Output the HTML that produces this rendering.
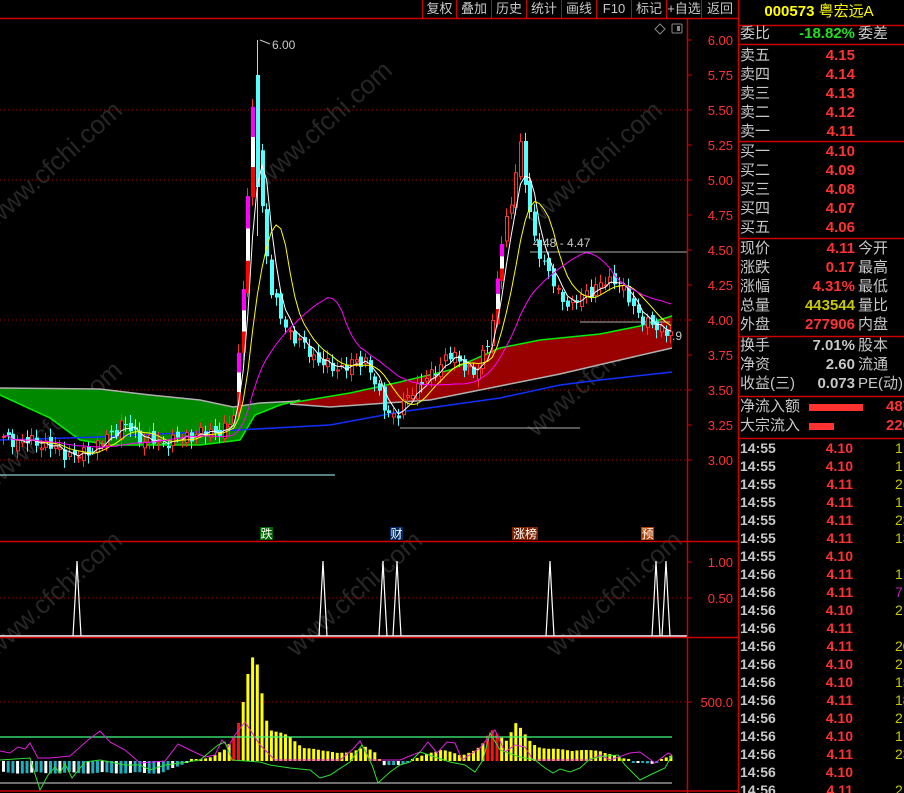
<!DOCTYPE html>
<html><head><meta charset="utf-8"><style>
html,body{margin:0;padding:0;background:#000;width:904px;height:793px;overflow:hidden;font-family:"Liberation Sans","Noto Sans CJK SC",sans-serif}
#wrap{position:relative;width:904px;height:793px}
svg{position:absolute;left:0;top:0}
.rp{position:absolute;left:739px;width:165px;font-size:15px;color:#c8c8c8;white-space:nowrap}
.r{position:absolute;height:19px;line-height:19px;width:165px}
.v{position:absolute;right:50px;font-weight:bold;color:#ff3232;text-align:right}
.l3{position:absolute;left:118px}
.tb{position:absolute;top:0;height:18px;line-height:17px;font-size:13px;color:#c8c8c8;text-align:center;border-left:1px solid #c00}
</style></head><body><div id="wrap">
<svg id="s" width="904" height="793"></svg>
<div class="tb" style="left:422px;width:33px">复权</div>
<div class="tb" style="left:456px;width:34px">叠加</div>
<div class="tb" style="left:491px;width:34px">历史</div>
<div class="tb" style="left:526px;width:34px">统计</div>
<div class="tb" style="left:561px;width:34px">画线</div>
<div class="tb" style="left:596px;width:34px">F10</div>
<div class="tb" style="left:631px;width:34px">标记</div>
<div class="tb" style="left:666px;width:34px">+自选</div>
<div class="tb" style="left:701px;width:36px">返回</div>
<div class="rp" style="top:0;height:25px;line-height:24px;color:#ffff00;font-weight:bold;font-size:15px;text-align:center;width:160px">000573 <span style="font-weight:normal">粤宏远A</span></div>
<div class="rp" id="rp"></div>
</div>
<script>
var rp=document.getElementById('rp'),h='';
function row(y,a,b,c,col,extra){h+='<div class="r" style="top:'+y+'px;left:1px">'+a+'<span class="v" style="color:'+(col||'#ff3232')+'">'+b+'</span><span class="l3">'+(c||'')+'</span>'+(extra||'')+'</div>';}
row(24,'委比','-18.82%','委差','#22dd22');
var s=['卖五','卖四','卖三','卖二','卖一'],p=['4.15','4.14','4.13','4.12','4.11'];
for(var i=0;i<5;i++)row(46+i*18.9,s[i],p[i]);
s=['买一','买二','买三','买四','买五'];p=['4.10','4.09','4.08','4.07','4.06'];
for(i=0;i<5;i++)row(142+i*18.9,s[i],p[i]);
row(239,'现价','4.11','今开');row(258,'涨跌','0.17','最高');row(277,'涨幅','4.31%','最低');
row(296,'总量','443544','量比','#c8c800');row(315,'外盘','277906','内盘');
row(336,'换手','7.01%','股本','#c8c8c8');row(355,'净资','2.60','流通','#c8c8c8');row(374,'收益(三)','0.073','PE(动)','#c8c8c8');
h+='<div class="r" style="top:397px;left:1px">净流入额</div><div style="position:absolute;top:404px;left:70px;width:54px;height:7px;background:#ff3232"></div><div class="r" style="top:397px;left:147px;color:#ff3232;font-weight:bold">487</div>';
h+='<div class="r" style="top:416px;left:1px">大宗流入</div><div style="position:absolute;top:423px;left:70px;width:25px;height:7px;background:#ff3232"></div><div class="r" style="top:416px;left:147px;color:#ff3232;font-weight:bold">220</div>';
var tr=[['14:55','4.10','1'],['14:55','4.10','1'],['14:55','4.11','2'],['14:55','4.11','1'],['14:55','4.11','23'],['14:55','4.11','13'],['14:55','4.10',''],['14:56','4.11','1'],['14:56','4.11','71'],['14:56','4.10','2'],['14:56','4.11',''],['14:56','4.11','20'],['14:56','4.10','2'],['14:56','4.10','15'],['14:56','4.11','18'],['14:56','4.10','21'],['14:56','4.10','1'],['14:56','4.11','23'],['14:56','4.10',''],['14:56','4.11','2']];
for(i=0;i<tr.length;i++){var y=439+i*18;h+='<div class="r" style="top:'+y+'px;left:1px;font-weight:bold;font-size:14px">'+tr[i][0]+'<span class="v" style="right:52px">'+tr[i][1]+'</span><span style="position:absolute;left:155px;font-weight:normal;color:'+(tr[i][2]=='71'?'#c020c0':'#c8c800')+'">'+tr[i][2]+'</span></div>';}
rp.innerHTML=h;

var S='';
function L(x1,y1,x2,y2,c,w,d){S+='<line x1="'+x1+'" y1="'+y1+'" x2="'+x2+'" y2="'+y2+'" stroke="'+c+'" stroke-width="'+(w||1)+'"'+(d?' stroke-dasharray="'+d+'"':'')+'/>';}
function T(x,y,t,c,sz,a){S+='<text x="'+x+'" y="'+y+'" fill="'+c+'" font-size="'+(sz||13)+'" font-family="Liberation Sans,Noto Sans CJK SC,sans-serif"'+(a?' text-anchor="'+a+'"':'')+'>'+t+'</text>';}
function P(pts,c,w,f){S+='<polyline points="'+pts.map(function(p){return p[0]+','+p[1]}).join(' ')+'" fill="'+(f||'none')+'" stroke="'+c+'" stroke-width="'+(w||1)+'"/>';}
function Y(p){return 40+(6-p)*140;}
[[60,170],[330,130],[600,170],[60,600],[360,600],[620,600],[60,430],[600,380]].forEach(function(w){S+='<text x="'+w[0]+'" y="'+w[1]+'" fill="#262626" font-size="26" transform="rotate(-42 '+w[0]+' '+w[1]+')" font-family="Liberation Sans,sans-serif" text-anchor="middle">www.cfchi.com</text>';});
[5.5,5.0,4.0,3.5,3.0].forEach(function(p){L(0,Y(p),687,Y(p),'#a00000',1,'1,3');});
L(0,598,687,598,'#a00000',1,'1,3');L(0,702,687,702,'#a00000',1,'1,3');
var gt=[[0,388],[100,389],[150,395],[200,400],[233,407],[260,403],[300,401]],gb=[[300,400],[280,405],[255,415],[240,440],[200,445],[110,445],[80,440],[50,418],[0,395]];
P(gt.concat(gb),'none',0,'#008800');P(gb.slice().reverse(),'#00ee00',1.5);P(gt,'#b0b0b0',1.5);
var rt=[[290,403],[350,393],[400,382],[450,370],[500,348],[540,340],[600,334],[640,326],[672,316]],rb=[[672,348],[620,360],[560,374],[500,386],[430,400],[330,407],[290,404]];
P(rt.concat(rb),'none',0,'#990000');P(rt,'#00ee00',1.5);P(rb,'#b0b0b0',1.5);
P([[0,440],[100,437],[200,432],[330,425],[400,412],[500,398],[560,385],[600,380],[672,372]],'#1030ff',1.5);
L(0,475,335,475,'#b0ffff',1);L(400,428,580,428,'#b0b0b0',1);L(530,252,688,252,'#b0b0b0',1);L(580,322,670,322,'#b0b0b0',1);
var kp=[[0,3.15],[40,3.12],[75,3.02],[100,3.12],[120,3.26],[140,3.15],[160,3.12],[190,3.18],[225,3.22],[232,3.3],[237,3.75],[242,4.3],[247,4.95],[252,5.6],[258,5.0],[263,4.6],[270,4.2],[280,4.0],[290,3.9],[310,3.75],[330,3.65],[350,3.68],[365,3.72],[380,3.4],[395,3.3],[410,3.5],[430,3.6],[445,3.75],[460,3.7],[475,3.6],[490,3.95],[500,4.55],[510,4.85],[518,5.3],[525,4.9],[532,4.6],[540,4.45],[555,4.2],[570,4.1],[585,4.2],[600,4.25],[615,4.3],[630,4.1],[650,3.95],[670,3.92]];
function interp(x){for(var k=1;k<kp.length;k++){if(x<=kp[k][0]){var a=kp[k-1],b=kp[k];return a[1]+(b[1]-a[1])*(x-a[0])/(b[0]-a[0]);}}return kp[kp.length-1][1];}
var N=143,cl=[],xs=[];
for(i=0;i<N;i++){var x=2+i*4.7;xs.push(x);cl.push(interp(x)+0.035*Math.sin(i*2.3)+0.02*Math.cos(i*5.1));}
for(i=0;i<N;i++){var c=cl[i],o=i?cl[i-1]+0.03*Math.sin(i*7.7):c,hi=Math.max(o,c)+0.02+0.04*Math.abs(Math.sin(i*3.3)),lo=Math.min(o,c)-0.02-0.04*Math.abs(Math.cos(i*1.9));
 var x=Math.round(xs[i]);
 if(x>=255&&x<=260){o=5.75;c=4.95;hi=6.0;lo=4.6;}
 var up=c>=o;var col=up?'#ff3232':'#54ffff';
 L(x+1.5,Y(hi),x+1.5,Y(lo),col,1);
 var t=Y(Math.max(o,c)),b=Y(Math.min(o,c));if(b-t<1)b=t+1;
 if(up&&c-o>0.25){var hh=b-t;S+='<rect x="'+x+'" y="'+t+'" width="4" height="'+hh/3+'" fill="#ff00ff"/><rect x="'+x+'" y="'+(t+hh/3)+'" width="4" height="'+hh/3+'" fill="#fff"/><rect x="'+x+'" y="'+(t+2*hh/3)+'" width="4" height="'+hh/3+'" fill="#f00"/>';}
 else if(up)S+='<rect x="'+(x+0.5)+'" y="'+t+'" width="3" height="'+(b-t)+'" fill="#000" stroke="#ff3232"/>';
 else S+='<rect x="'+x+'" y="'+t+'" width="4" height="'+(b-t)+'" fill="#54ffff"/>';}
function ma(n){var r=[];for(var i=0;i<N;i++){var s=0,k=0;for(var j=Math.max(0,i-n+1);j<=i;j++){s+=cl[j];k++;}r.push([xs[i]+1.5,Y(s/k)]);}return r;}
P(ma(4),'#ffffff',1);P(ma(8),'#ffff00',1);P(ma(20),'#ff00ff',1);
T(272,49,'6.00','#c8c8c8',12);L(260,40,270,44,'#c8c8c8');T(533,247,'4.48 - 4.47','#c8c8c8',12);T(672,340,'.9','#c8c8c8',12);
[[260,'跌','#006600'],[390,'财','#002a66'],[512,'涨榜','#7a2200'],[641,'预','#b04000']].forEach(function(q){var w=q[1].length*13;S+='<rect x="'+q[0]+'" y="527" width="'+w+'" height="13" fill="'+q[2]+'"/>';T(q[0]+w/2,538,q[1],'#fff',12,'middle');});
L(0,636,687,636,'#fff',1.5);
[77,323,383,397,550,656,666].forEach(function(x){P([[x-4,636],[x-2,600],[x,561],[x+2,600],[x+4,636]],'#fff',1.2);});
var vk=[[0,-12],[160,-12],[175,-6],[190,0],[210,4],[225,12],[232,25],[238,45],[244,70],[248,95],[252,100],[256,92],[260,70],[264,45],[268,35],[275,30],[285,25],[300,15],[320,10],[350,8],[365,15],[375,8],[380,-4],[400,-4],[420,5],[440,12],[460,5],[480,15],[490,30],[505,22],[515,38],[520,30],[530,18],[545,12],[600,10],[630,0],[650,-3],[670,6]];
function vi(x){for(var k=1;k<vk.length;k++){if(x<=vk[k][0]){var a=vk[k-1],b=vk[k];return a[1]+(b[1]-a[1])*(x-a[0])/(b[0]-a[0]);}}return 5;}
for(i=0;i<N;i++){var x=xs[i],v=vi(x)*(0.9+0.15*Math.abs(Math.sin(i*2.7)));var col;
 if(v>=0)col=((x>228&&x<240)||(x>485&&x<498))?'#ff1010':'#ffff00';else col=(i%3==0)?'#ffffff':'#1ab0c0';
 if(Math.abs(v)<2)v=v<0?-2:2;
 S+='<rect x="'+x+'" y="'+(v>=0?761-v:761)+'" width="3" height="'+Math.abs(v)+'" fill="'+col+'"/>';}
L(0,737,672,737,'#40ff80',1.2);L(0,783,672,783,'#b0b0b0',1.2);
P([[0,751],[10,753],[18,747],[25,749],[30,743],[38,758],[50,758],[70,756],[88,740],[100,731],[110,742],[125,750],[140,763],[165,761],[178,744],[190,750],[205,757],[215,755],[222,740],[228,747],[235,735],[245,722],[260,745],[275,760],[340,760],[352,750],[360,741],[370,760],[400,760],[420,752],[428,742],[437,753],[447,742],[455,743],[462,760],[480,748],[490,735],[495,730],[505,752],[515,745],[525,747],[533,760],[590,760],[600,755],[610,760],[630,753],[640,752],[655,763],[668,753],[672,755]],'#e020e0',1);
P([[0,760],[30,758],[40,790],[48,775],[55,767],[60,773],[65,764],[72,778],[85,762],[100,760],[125,765],[140,765],[150,770],[165,765],[180,763],[200,760],[218,745],[225,742],[232,760],[260,762],[270,765],[290,768],[310,770],[320,778],[330,775],[350,762],[362,745],[372,765],[378,783],[390,772],[400,765],[410,762],[420,752],[450,762],[465,765],[475,772],[483,760],[490,733],[500,750],[520,757],[535,760],[545,768],[553,773],[560,769],[570,772],[580,768],[590,759],[605,756],[618,755],[625,765],[640,780],[652,774],[665,768],[672,755]],'#30e030',1);
L(0,18.5,738,18.5,'#c00',1.5);L(0,541.5,738,541.5,'#c00',1.5);L(0,637.5,738,637.5,'#c00',1.5);L(0,791,738,791,'#c00',1.5);
L(687.5,19,687.5,793,'#c00',1.5);L(738.5,0,738.5,793,'#c00',1.5);
[6,5.75,5.5,5.25,5,4.75,4.5,4.25,4,3.75,3.5,3.25,3].forEach(function(p){var y=Y(p);L(687,y,692,y,'#c00');T(733,y+5,p.toFixed(2),'#ff3232',13,'end');});
L(687,562,692,562,'#c00');T(733,567,'1.00','#ff3232',13,'end');L(687,598,692,598,'#c00');T(733,603,'0.50','#ff3232',13,'end');
L(687,702,692,702,'#c00');T(733,707,'500.0','#ff3232',13,'end');
[25,44,141,238,336,396,438].forEach(function(y){L(739,y+0.5,904,y+0.5,'#c00',1.5);});
S+='<path d="M660 24 L665 29 L660 34 L655 29Z" fill="none" stroke="#888"/><rect x="672" y="24" width="10" height="9" rx="1" fill="none" stroke="#888"/><rect x="677" y="26" width="3" height="5" fill="#888"/>';
document.getElementById('s').innerHTML=S;
</script>
</body></html>
